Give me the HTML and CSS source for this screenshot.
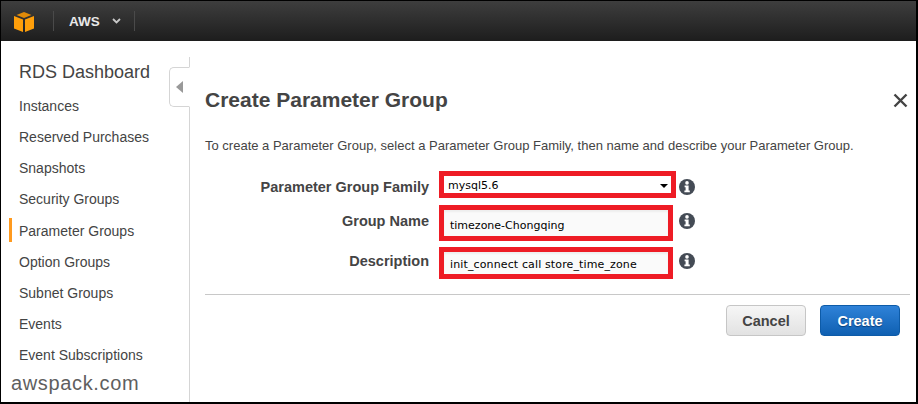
FILE: index.html
```html
<!DOCTYPE html>
<html lang="en">
<head>
<meta charset="utf-8">
<title>Create Parameter Group</title>
<link rel="stylesheet" href="styles.css">
</head>
<body>
<div class="frame">
  <header class="topbar">
    <svg class="logo" width="20" height="20" viewBox="0 0 20 20"><path d="M10 0 L17.5 3 L10 6 L2.5 3Z" fill="#e08a08"/><path d="M0 4 L9 7.6 V20 L0 16.4Z" fill="#ff9f0a"/><path d="M20 4 L11 7.6 V20 L20 16.4Z" fill="#ff9f0a"/></svg>
    <span class="sep sep-a"></span>
    <span class="brand">AWS</span>
    <svg class="caret" width="9" height="6" viewBox="0 0 9 6"><path d="M1 1 L4.5 4.5 L8 1" fill="none" stroke="#c8c8c8" stroke-width="1.8"/></svg>
    <span class="sep sep-b"></span>
  </header>
  <div class="body">
    <nav class="side">
      <h2 class="side-title">RDS Dashboard</h2>
      <a class="nav">Instances</a>
      <a class="nav">Reserved Purchases</a>
      <a class="nav">Snapshots</a>
      <a class="nav">Security Groups</a>
      <a class="nav active">Parameter Groups</a>
      <a class="nav">Option Groups</a>
      <a class="nav">Subnet Groups</a>
      <a class="nav">Events</a>
      <a class="nav">Event Subscriptions</a>
      <div class="tab"><span class="tab-arrow"></span></div>
    </nav>
    <main class="main">
      <div class="head">
        <h1 class="title">Create Parameter Group</h1>
        <svg class="close" width="15" height="15" viewBox="0 0 15 15"><path d="M1.5 1.5 L13.5 13.5 M13.5 1.5 L1.5 13.5" stroke="#444" stroke-width="2.4"/></svg>
      </div>
      <p class="intro">To create a Parameter Group, select a Parameter Group Family, then name and describe your Parameter Group.</p>
      <div class="row row-1">
        <label class="label">Parameter Group Family</label>
        <div class="mark mark-select"><div class="select"><span class="val">mysql5.6</span><span class="drop"></span></div></div>
        <svg class="info" viewBox="0 0 16 16" width="16" height="16"><use href="#i"/></svg>
      </div>
      <div class="row row-2">
        <label class="label label-2">Group Name</label>
        <div class="mark mark-name"><div class="input input-name"><span class="val">timezone-Chongqing</span></div></div>
        <svg class="info info-2" viewBox="0 0 16 16" width="16" height="16"><use href="#i"/></svg>
      </div>
      <div class="row row-3">
        <label class="label label-3">Description</label>
        <div class="mark mark-desc"><div class="input input-desc"><span class="val">init_connect call store_time_zone</span></div></div>
        <svg class="info info-3" viewBox="0 0 16 16" width="16" height="16"><use href="#i"/></svg>
      </div>
      <div class="actions">
        <button class="btn cancel">Cancel</button>
        <button class="btn create">Create</button>
      </div>
    </main>
  </div>
  <div class="watermark">awspack.com</div>
</div>
<svg width="0" height="0" class="defs"><defs><g id="i"><circle cx="8" cy="8" r="8" fill="#444b55"/><circle cx="8" cy="3.9" r="1.8" fill="#fff"/><path d="M5.6 6.4 H9.6 V11.4 H10.8 V13.2 H5.4 V11.4 H6.6 V8.2 H5.6Z" fill="#fff"/></g></defs></svg>
</body>
</html>
```
FILE: styles.css
```css
* { box-sizing: border-box; }
html, body { margin: 0; padding: 0; background: #fff; }
body { width: 918px; height: 404px; overflow: hidden; font-family: "Liberation Sans", Arial, sans-serif; }
.defs { position: absolute; }
.frame { position: relative; width: 918px; height: 404px; border: 1px solid #000; border-right-width: 2px; border-bottom-width: 2px; display: flex; flex-direction: column; overflow: hidden; background: #fff; }
.topbar { height: 40px; flex: none; display: flex; align-items: center; background: linear-gradient(#3e3e3e, #1d1d1d); padding-left: 13px; }
.logo { flex: none; margin-left: 0; margin-top: 1px; }
.sep { width: 1px; height: 20px; background: #4a4a4a; flex: none; }
.sep-a { margin-left: 19px; }
.brand { margin-left: 15px; color: #e8e8e8; font-size: 13.5px; font-weight: 700; }
.caret { margin-left: 12px; }
.sep-b { margin-left: 13px; }
.body { flex: 1; display: flex; min-height: 0; }
.side { position: relative; width: 189px; flex: none; padding: 21px 0 0 0; display: flex; flex-direction: column; }
.side::after { content: ""; position: absolute; right: 0; top: 16px; bottom: 0; width: 1px; background: #d5d5d5; }
.side-title { margin: 0 0 8px 18px; font-size: 18px; font-weight: 400; line-height: 21px; color: #444; }
.nav { display: block; margin-left: 7px; padding-left: 11px; height: 31.15px; line-height: 31px; font-size: 14px; color: #444; }
.nav.active { position: relative; }
.nav.active::before { content: ""; position: absolute; left: 1px; top: 2.4px; width: 3px; height: 24px; background: #ff9a1e; }
.tab { position: absolute; right: 0; top: 26px; width: 21px; height: 40px; background: #fff; border: 1px solid #d5d5d5; border-right: 1px solid #fff; border-radius: 5px 0 0 5px; display: flex; align-items: center; justify-content: center; z-index: 1; }
.tab-arrow { width: 0; height: 0; border-style: solid; border-width: 6px 7px 6px 0; border-color: transparent #999 transparent transparent; }
.main { flex: 1; padding: 0 8px 0 15px; min-width: 0; }
.head { display: flex; justify-content: space-between; align-items: center; margin-top: 47px; height: 24px; }
.title { margin: 0; font-size: 21px; font-weight: 700; color: #444; line-height: 24px; }
.intro { margin: 25px 0 0; font-size: 13px; line-height: 18px; color: #444; white-space: nowrap; }
.row { display: flex; align-items: flex-start; }
.row-1 { margin-top: 16px; }
.row-2 { margin-top: 7px; }
.row-3 { margin-top: 6px; }
.label { width: 224px; text-align: right; font-size: 14.5px; font-weight: 700; color: #444; line-height: 16px; margin-top: 8px; flex: none; }
.label-2 { margin-top: 8px; }
.label-3 { margin-top: 6px; }
.mark { margin-left: 10px; border: 5px solid #ee1c25; background: #fff; flex: none; }
.mark-select { width: 237px; height: 27px; }
.mark-name { width: 234px; height: 36px; }
.mark-desc { width: 234px; height: 32px; }
.select { height: 17px; padding: 2px 0 0 4px; display: flex; align-items: center; justify-content: space-between; }
.input { height: 100%; background: #fafafa; box-shadow: inset 0 2px 2px #eee; padding-left: 6px; }
.input-name { padding-top: 5px; }
.input-desc { padding-top: 2px; }
.val { font-family: "DejaVu Sans", sans-serif; font-size: 11px; line-height: 16px; color: #000; white-space: nowrap; }
.input-desc .val { letter-spacing: 0.13px; }
.drop { width: 0; height: 0; margin-right: 3px; border-style: solid; border-width: 4px 4px 0 4px; border-color: #000 transparent transparent transparent; }
.info { flex: none; margin: 8px 0 0 3px; }
.info-2 { margin: 8px 0 0 6px; }
.info-3 { margin: 6px 0 0 6px; }
.actions { margin-top: 15px; border-top: 1px solid #c8c8c8; padding: 10px 10px 0 0; margin-right: -2px; display: flex; justify-content: flex-end; gap: 14px; }
.btn { width: 80px; height: 31px; border-radius: 4px; font-family: "Liberation Sans", Arial, sans-serif; font-size: 14.5px; font-weight: 700; padding: 0; }
.cancel { background: linear-gradient(#f6f6f6, #e2e2e2); border: 1px solid #c6c6c6; color: #444; }
.create { background: linear-gradient(#2f82d8, #0f60b2); border: 1px solid #0d5ba8; color: #fff; text-shadow: 0 1px 1px #0a3e78; }
.watermark { position: absolute; left: 10px; bottom: 7px; font-size: 20px; letter-spacing: 0.65px; line-height: 23px; color: #5f5f5f; }
```
